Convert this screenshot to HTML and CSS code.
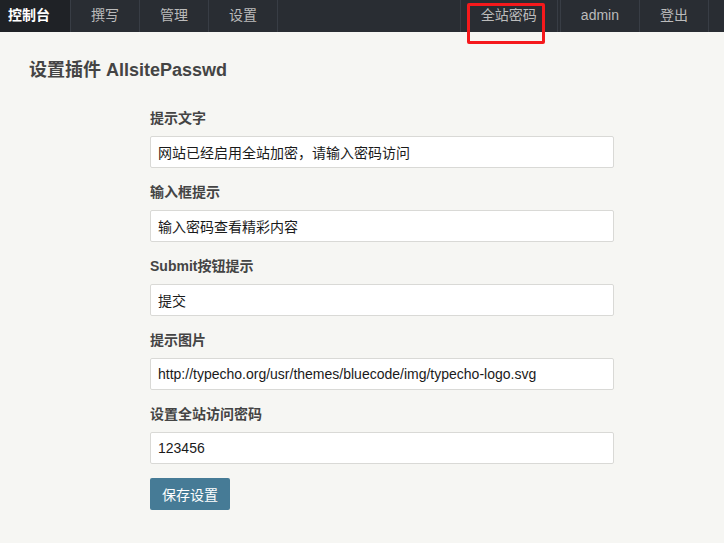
FILE: index.html
```html
<!DOCTYPE html>
<html lang="zh-CN">
<head>
<meta charset="utf-8">
<title>设置插件 AllsitePasswd</title>
<link rel="stylesheet" href="styles.css">
</head>
<body>
<nav class="topnav">
  <div class="nav-left">
    <a class="nav-item active first">控制台</a>
    <a class="nav-item">撰写</a>
    <a class="nav-item">管理</a>
    <a class="nav-item">设置</a>
  </div>
  <div class="nav-right">
    <div class="nav-group extra">
      <a class="nav-item op">全站密码</a>
      <span class="highlight-box"></span>
    </div>
    <div class="nav-group">
      <a class="nav-item op">admin</a>
      <a class="nav-item op last">登出</a>
    </div>
  </div>
</nav>
<main class="page">
  <h2 class="page-title">设置插件 AllsitePasswd</h2>
  <form class="config-form">
    <div class="field">
      <label class="field-label">提示文字</label>
      <input class="text-input" type="text" value="网站已经启用全站加密，请输入密码访问">
    </div>
    <div class="field">
      <label class="field-label">输入框提示</label>
      <input class="text-input" type="text" value="输入密码查看精彩内容">
    </div>
    <div class="field">
      <label class="field-label">Submit按钮提示</label>
      <input class="text-input" type="text" value="提交">
    </div>
    <div class="field">
      <label class="field-label">提示图片</label>
      <input class="text-input" type="text" value="http://typecho.org/usr/themes/bluecode/img/typecho-logo.svg">
    </div>
    <div class="field">
      <label class="field-label">设置全站访问密码</label>
      <input class="text-input" type="text" value="123456">
    </div>
    <div class="actions">
      <button class="btn-primary" type="button">保存设置</button>
    </div>
  </form>
</main>
</body>
</html>
```
FILE: styles.css
```css
* { box-sizing: border-box; }
html, body {
  margin: 0;
  padding: 0;
}
body {
  background: #F6F6F3;
  font-family: "Liberation Sans", "Noto Sans CJK SC", sans-serif;
  font-size: 14px;
  color: #444;
  width: 724px;
  height: 543px;
  overflow: hidden;
}
.topnav {
  display: flex;
  justify-content: space-between;
  height: 32px;
  background: #292D33;
  padding-right: 15px;
}
.nav-left, .nav-right, .nav-group {
  display: flex;
}
.nav-item {
  display: block;
  height: 32px;
  line-height: 30px;
  padding: 0 20px 2px;
  color: #BBBBBB;
  text-decoration: none;
  border-right: 1px solid #383D45;
  white-space: nowrap;
}
.nav-item.first {
  padding-left: 8px;
}
.nav-item.active {
  background: #1F2226;
  color: #FFFFFF;
  font-weight: bold;
}
.nav-item.op {
  border-right: none;
  border-left: 1px solid #383D45;
}
.nav-item.op.last {
  border-right: 1px solid #383D45;
}
.nav-group.extra {
  position: relative;
  border-right: 1px solid #383D45;
  margin-right: 2px;
}
.highlight-box {
  position: absolute;
  left: 7px;
  top: 3px;
  width: 78px;
  height: 41px;
  border: 3px solid #F5191C;
  border-radius: 2px;
  z-index: 5;
}
.page {
  padding: 0 0 0 29px;
}
.page-title {
  margin: 0;
  padding-top: 27px;
  font-size: 18px;
  line-height: 22px;
  font-weight: bold;
  color: #444;
}
.config-form {
  margin-left: 121px;
  width: 464px;
  padding-top: 27px;
}
.field {
  display: flex;
  flex-direction: column;
  margin-bottom: 14px;
}
.field-label {
  font-weight: bold;
  line-height: 20px;
  margin-bottom: 8px;
  color: #444;
}
.text-input {
  width: 464px;
  height: 32px;
  padding: 0 7px;
  border: 1px solid #D9D9D6;
  border-radius: 2px;
  background: #FFFFFF;
  font-family: "Liberation Sans", "Noto Sans CJK SC", sans-serif;
  font-size: 14px;
  color: #1a1a1a;
  outline: none;
}
.actions {
  display: flex;
}
.btn-primary {
  height: 32px;
  padding: 0 12px;
  border: none;
  border-radius: 2px;
  background: #467B96;
  color: #FFFFFF;
  font-family: "Liberation Sans", "Noto Sans CJK SC", sans-serif;
  font-size: 14px;
  cursor: pointer;
}
```
